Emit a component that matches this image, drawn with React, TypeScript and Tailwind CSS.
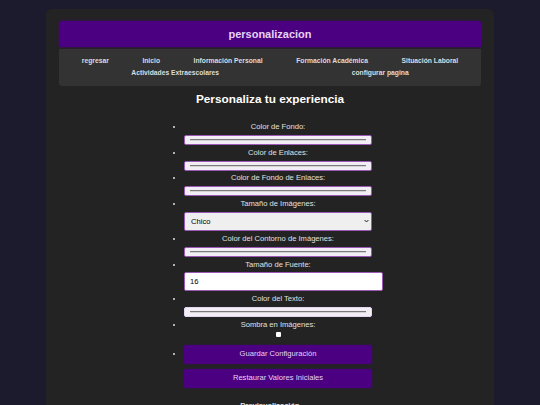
import React from "react";

const links = [
  "regresar",
  "Inicio",
  "Información Personal",
  "Formación Académica",
  "Situación Laboral",
  "Actividades Extraescolares",
  "configurar pagina",
];

function ColorBox({ light = false }: { light?: boolean }) {
  return (
    <div
      className={
        light
          ? "mt-[3.7px] flex h-[10px] w-full items-center rounded-[2px] border border-[#e4d6f2] bg-[#f3eef6] px-[5px]"
          : "mt-[3.7px] flex h-[10px] w-full items-center rounded-[2px] border border-[#9b59b6] bg-[#f3eef6] px-[5px]"
      }
    >
      <div className="h-[2px] w-full border-t border-[#7a7a7a] bg-[#d4d4d4]" />
    </div>
  );
}

function Label({ children }: { children: React.ReactNode }) {
  return <label className="block text-center">{children}</label>;
}

export default function App() {
  return (
    <div className="min-h-screen bg-[#1c1b2e] pt-[8.5px] font-['Liberation_Sans',Arial,sans-serif]">
      <div className="mx-auto w-[448px] rounded-[6px] bg-[#232323] px-[13px] pt-[12.5px] pb-[30px]">
        <header className="flex h-[26px] items-center justify-center rounded-t-[3px] bg-[#4b0082] shadow-[0_0_3px_rgba(75,0,130,0.8)]">
          <h1 className="text-[11px] font-bold leading-none text-[#e6d3f5]">personalizacion</h1>
        </header>
        <nav className="mt-[1.5px] flex flex-wrap justify-around rounded-b-[3px] bg-[#333333] px-[6px] py-[6.5px]">
          {links.map((l) => (
            <a key={l} href="#" className="mx-[10px] text-[6.75px] font-bold leading-[12px] text-[#dcdcdc]">
              {l}
            </a>
          ))}
        </nav>
        <h2 className="mt-[7.3px] text-center text-[11.8px] font-bold leading-[13.6px] text-white">
          Personaliza tu experiencia
        </h2>
        <ul className="mx-auto mt-[15.9px] w-[212px] list-disc pl-[20px] pr-[4px] text-[7.6px] leading-[9px] text-[#e0e0e0]">
          <li className="mb-[2.9px]">
            <Label>Color de Fondo:</Label>
            <ColorBox />
          </li>
          <li className="mb-[2.9px]">
            <Label>Color de Enlaces:</Label>
            <ColorBox />
          </li>
          <li className="mb-[2.9px]">
            <Label>Color de Fondo de Enlaces:</Label>
            <ColorBox />
          </li>
          <li className="mb-[2.9px]">
            <Label>Tamaño de Imágenes:</Label>
            <div className="relative mt-[3.7px]">
              <select
                defaultValue="chico"
                className="block h-[19.4px] w-full appearance-none rounded-[2px] border border-[#9b59b6] bg-[#efefef] pl-[6px] text-[7.6px] text-black"
              >
                <option value="chico">Chico</option>
                <option value="mediano">Mediano</option>
                <option value="grande">Grande</option>
              </select>
              <svg
                className="pointer-events-none absolute right-[3px] top-1/2 -translate-y-1/2"
                width="5"
                height="4"
                viewBox="0 0 5 4"
              >
                <path d="M0.6 1 L2.5 3 L4.4 1" fill="none" stroke="#222" strokeWidth="1" />
              </svg>
            </div>
          </li>
          <li className="mb-[2.9px]">
            <Label>Color del Contorno de Imágenes:</Label>
            <ColorBox />
          </li>
          <li className="mb-[2.9px]">
            <Label>Tamaño de Fuente:</Label>
            <input
              type="number"
              defaultValue={16}
              className="mt-[3.7px] block h-[19px] w-[199px] rounded-[2px] border border-[#9b59b6] bg-white pl-[5px] text-[7.6px] text-black"
            />
          </li>
          <li className="mb-[2.9px]">
            <Label>Color del Texto:</Label>
            <ColorBox light />
          </li>
          <li className="mb-[2.9px]">
            <Label>Sombra en Imágenes:</Label>
            <input
              type="checkbox"
              className="mx-auto mt-[3.7px] block h-[5px] w-[5px] appearance-none rounded-[1px] bg-white"
            />
          </li>
          <li>
            <button className="mt-[5px] inline-block h-[18.4px] w-full rounded-[2px] bg-[#4b0082] text-[7.6px] leading-[18.4px] text-[#e6d3f5] shadow-[0_0_2px_rgba(75,0,130,0.7)]">
              Guardar Configuración
            </button>
            <button className="mt-[5.7px] inline-block h-[18.4px] w-full rounded-[2px] bg-[#4b0082] text-[7.6px] leading-[18.4px] text-[#e6d3f5] shadow-[0_0_2px_rgba(75,0,130,0.7)]">
              Restaurar Valores Iniciales
            </button>
          </li>
        </ul>
        <h3 className="mt-[13.3px] text-center text-[7.6px] font-bold leading-[9px] text-[#e0e0e0]">
          Previsualización
        </h3>
      </div>
    </div>
  );
}
